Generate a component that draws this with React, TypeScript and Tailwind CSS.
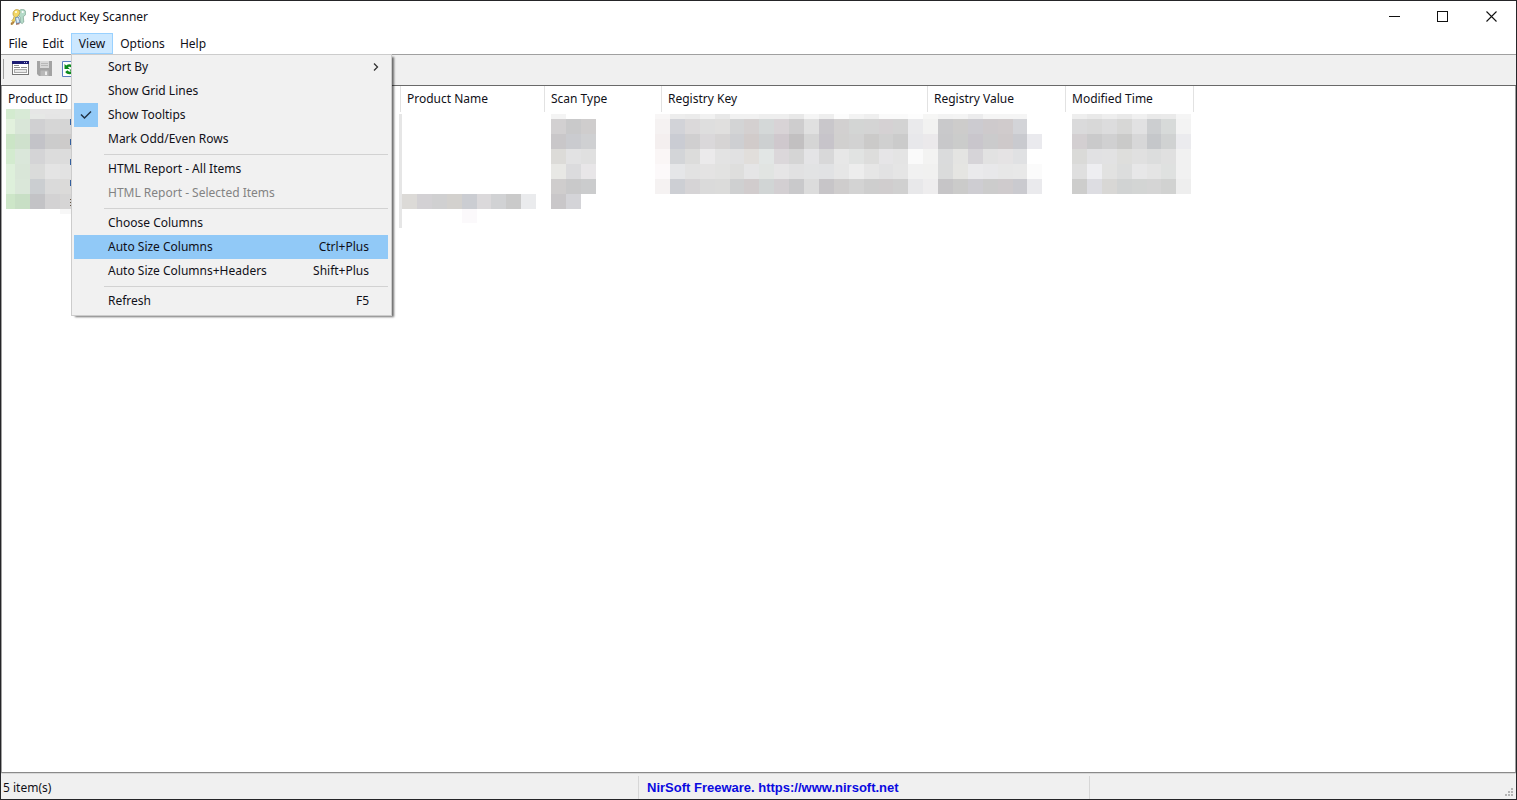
import React from "react";

const PITCH = 14.9;
const ROW_EDGES = [2, 7, 22, 37, 52, 67, 82, 97];

const viewMenu = [
  [
    { label: "Sort By", submenu: true },
    { label: "Show Grid Lines" },
    { label: "Show Tooltips", checked: true },
    { label: "Mark Odd/Even Rows" },
  ],
  [
    { label: "HTML Report - All Items" },
    { label: "HTML Report - Selected Items", disabled: true },
  ],
  [
    { label: "Choose Columns" },
    { label: "Auto Size Columns", keys: "Ctrl+Plus", active: true },
    { label: "Auto Size Columns+Headers", keys: "Shift+Plus" },
  ],
  [{ label: "Refresh", keys: "F5" }],
] as {
  label: string;
  keys?: string;
  submenu?: boolean;
  checked?: boolean;
  disabled?: boolean;
  active?: boolean;
}[][];

const columns = [
  { label: "Product ID", width: "w-[399px]" },
  { label: "Product Name", width: "w-[144px]" },
  { label: "Scan Type", width: "w-[117px]" },
  { label: "Registry Key", width: "w-[266px]" },
  { label: "Registry Value", width: "w-[138px]" },
  { label: "Modified Time", width: "w-[128px]" },
];

// One string per row of blocks, one colour per block, "-" leaves it empty
const productId = [
  "d3ebcf d8ead6 e6e8e6 e5e5e5 e6e6e6",
  "e2f1dd d9e6d8 d0d0d2 d6d6d6 d5d5d5",
  "cbe5c6 cfe1cd c3c3c8 cccccc cdcbca",
  "d3ebcf dae7da d4d4d6 dcdcdc dcdcdc",
  "def0db d9e6d8 dadbda e4e4e4 e2e2e2",
  "def0db dae7d9 cbced1 dadada dbdad9",
  "cde6c8 c8dfc5 c3c3c6 d3d2d3 d6d5d5",
];

const productName = ["-", "-", "-", "-", "-", "-", "dcdad7 d3d1d4 d0d0d1 d3d1ce cbcdd2 dbd9db d1d2d4 cacaca eaebed"];

const scanType = [
  "f4f4f4",
  "d2d0d1 c9c9ca cfcdcd",
  "c9c7c9 cacbcf cfd0d2",
  "dcdbd8 e2e2e3 e0e0e0",
  "e8e8e5 dbdbdd e8e6e8",
  "cfcdcd c9c9ca cbcccd",
  "c9c7c9 d4d4d8",
];

const registryKey = [
  "f8f6f6 ededed ebebeb f1f1f1 e8e8e8 f1f1f1 f1f1f1 eeeeee eeeeee e8e8e8 f5f5f5 eeeeee fcfcfc f3f3f3 efefef fafafa fafafa fdfdfd f6f6f5",
  "f5f2f2 d2d3d8 dbd9da dedede e0dfde d3d4d5 d4d0d0 d4d8d8 d8d3d6 cecdce e0e0e0 c9c7cb d2d0d0 d3d5d4 d4d4d4 d5d1d3 d3d3d3 eaeaec f2f2f1",
  "f4efef caccd3 d0cfd0 dad8da d6d4d4 cecfd2 d1cbca cdd0d1 cfc8cd c2c0c1 d5d5d5 c7c4ca d1d0cf d2d2d2 cbcac9 d0d0d0 cbcbcb e8e8eb ebe9eb",
  "faf6f6 d3d5d8 dcdcdb ebeaeb e3e3e3 e1e1e2 e1dedb e2e6e5 dbd7da d5d5d5 e4e4e6 d8d8d9 e7e7e7 e1e3e2 dddddc e6e5e7 e4e4e4 fafafa f3f3f2",
  "fcf9fa e5e6e8 e2e2e2 e4e3e3 e2e2e1 dededd e5e5e6 e1e4e2 e6e5e6 e1e1e2 e2e3e4 e1e2e4 e6e6e6 ededed e6e6e6 e2e2e3 e5e5e5 f1f1f1 f1f1f0",
  "f5f2f2 cdcfd4 d6d4d6 dadada dbdbda cfd0d1 d1cccd d1d5d5 d3cfd2 c9c9cb dcdcdc c7c5c8 cfcdcd d3d3d3 cecece d0cdce d0d0d0 e8e8ea eeedee",
];

const registryValue = [
  "f3f3f3 f4f4f4 ececed f5f5f5 f5f5f5 f5f5f5",
  "c9c9cb cdcccb cccbd0 cecacc d0cbcc d3d4d8",
  "c8c8ca cbcccb c9c6cc cbcbcc cec9ca c9cacf eaeaee",
  "dadbdc e4e4e2 d6d4d8 e2e2e2 e5e3e4 e0e1e3",
  "dadbdb e5e5e2 eaeaec e8e8ea e7e7e7 e8e8e8 fbfbfb",
  "c6c5c7 cbcbca cecdd2 cccccc cfcbcd cacacf eaeaed",
];

const modifiedTime = [
  "eeeeee e9e9e9 eeeeee e9e9e9 f0f0f0 e9e9e9 eaeaea f5f5f5",
  "dadadb d8d8d8 dcdcdd d7d7d6 e1e1e2 ccced0 d7dad9 f3f3f3",
  "d3cfd1 cacacb d0d0d1 cacac9 d7d7d8 c5c7ca d0d2d2 ebebee",
  "dadad8 e1e1e3 e2e2e3 dededc e0e0e0 dcdddd e0e0e0 f1f1f1",
  "dfdfdf eeeef1 e2e2e1 dcdddd e7e7e8 e4e4e4 dfe1e0 f1f1f1",
  "cdcdcc dddde2 d8d7d5 d1d3d3 d3d5d4 d5d5d5 d1d2d1 eeeeee",
];

const Mosaic = ({ rows, start, children }: { rows: string[]; start: number; children?: React.ReactNode }) => (
  <svg className="block w-full h-32 overflow-visible" shapeRendering="crispEdges" aria-hidden="true">
    {rows.map((row, r) =>
      row.split(" ").map((color, c) =>
        color === "-" ? null : (
          <rect
            key={`${r}-${c}`}
            x={Math.round(start + c * PITCH)}
            y={ROW_EDGES[r]}
            width={Math.round(start + (c + 1) * PITCH) - Math.round(start + c * PITCH)}
            height={ROW_EDGES[r + 1] - ROW_EDGES[r]}
            fill={`#${color}`}
          />
        )
      )
    )}
    {children}
  </svg>
);

const KeyIcon = () => (
  <svg className="size-4" viewBox="0 0 16 16" aria-hidden="true">
    <path d="M8.500 2.500C9.500.600 12 .100 14 .800c1.800.700 2.300 3 1.600 4.600-.5 1.200-1.500 1.700-2.300 2.200L13.800 13l-1.600 1.600-1.800-1-.2-5.400C8.300 7 7.600 4.600 8.500 2.500z" fill="#b4dac8" stroke="#7ba08f" strokeWidth=".7" />
    <path d="M3.500 2.500C4.800.300 7.500 0 9 1.200c1.300 1.200 1 3.600-.5 5L5.500 11 3 15.300l-2 .2.2-1.800 1.300-1.200-.700-1 1.500-1.500L4 7.500C2.800 6 2.700 4 3.500 2.500z" fill="#f3d766" stroke="#b39643" strokeWidth=".7" />
    <circle cx="6" cy="2.900" r="1" fill="#fff" />
    <circle cx="12.700" cy="3" r="1.100" fill="#fff" />
    <path d="M5.500 8.500l3-.5 1.500 5.500-3.500 1z" fill="#dcebf5" stroke="#527da8" strokeWidth=".8" />
    <path d="M1 15.300l3-2.600M6 15.200l3.500-.5" stroke="#8a4a35" strokeWidth="1" />
  </svg>
);

const WindowIcon = () => (
  <svg className="w-[17px] h-[15px]" viewBox="0 0 17 15" aria-hidden="true">
    <rect x=".5" y=".5" width="16" height="13" fill="#fff" stroke="#777" />
    <rect x="0" y="0" width="17" height="3" fill="#1b1b72" />
    <path d="M12 1.500h1M14 1.500h1" stroke="#c8c8e8" />
    <path d="M2 4.500h5M2 6.500h6M9 6.500h6" stroke="#8a8a8a" />
    <rect x="2.500" y="8.500" width="12" height="3" fill="#e8e8e8" stroke="#aaa" />
  </svg>
);

const SaveIcon = () => (
  <svg className="w-[15px] h-[15px]" viewBox="0 0 15 15" aria-hidden="true">
    <path d="M0 0h15v15H2l-2-2z" fill="#a3a3a3" />
    <path d="M3 0h9v7H3z" fill="#d8d8d8" />
    <path d="M4 2.500h7M4 4.500h7" stroke="#b8b8b8" />
    <path d="M3.500 9.500h8V15h-8z" fill="#b9b9b9" />
    <path d="M8 10.500h2V14H8z" fill="#efefef" />
  </svg>
);

const RefreshIcon = () => (
  <svg className="w-[15px] h-[16px]" viewBox="0 0 15 16" aria-hidden="true">
    <path d="M.5.500h11l3 3v12H.500z" fill="#fff" stroke="#5c7fc0" />
    <path d="M2.500 8V3l1.700 1.500C6.500 2.500 10 3 11.800 5.500L9.600 7.200C8.600 5.800 7 5.500 6 6.300L7.700 8z" fill="#0c8a1c" />
    <path d="M12.500 8.500v5l-1.700-1.500c-2.300 2-5.800 1.500-7.600-1l2.200-1.700c1 1.400 2.600 1.700 3.600.9L7.300 8.500z" fill="#0c8a1c" />
  </svg>
);

const ViewMenu = () => (
  <div role="menu" className="absolute left-0 top-[21px] z-20 w-[321px] border border-[#ccc] bg-[#f1f1f1] pl-[2px] pr-[3px] pb-[2px] shadow-[3px_2px_2px_-1px_#00000090]">
    {viewMenu.map((group, g) => (
      <div key={g}>
        {g > 0 && (
          <div className="h-[6px] pl-[30px] flex items-center">
            <hr className="w-full border-[#d2d2d2]" />
          </div>
        )}
        {group.map((item) => (
          <button
            key={item.label}
            role={item.checked ? "menuitemcheckbox" : "menuitem"}
            aria-checked={item.checked}
            disabled={item.disabled}
            className={`flex w-full h-6 items-center pr-[19px] text-left whitespace-nowrap ${item.active ? "bg-[#91c9f7]" : ""} ${item.disabled ? "text-[#838383]" : ""}`}
          >
            <span className={`flex w-6 h-full items-center justify-center mr-[10px] ${item.checked ? "bg-[#91c9f7]" : ""}`}>
              {item.checked && (
                <svg className="w-3 h-2.5" viewBox="0 0 12 10" aria-hidden="true">
                  <path d="M1 4.500l3.500 3.500L11 1.500" fill="none" stroke="#223344" strokeWidth="1.500" />
                </svg>
              )}
            </span>
            <span className="flex-1">{item.label}</span>
            {item.keys && <span>{item.keys}</span>}
            {item.submenu && (
              <svg className="w-[6px] h-2.5 -mr-[10px]" viewBox="0 0 6 10" aria-hidden="true">
                <path d="M1 1.500l3.500 3.500L1 8.500" fill="none" stroke="#333" strokeWidth="1.300" />
              </svg>
            )}
          </button>
        ))}
      </div>
    ))}
  </div>
);

export default function App() {
  return (
    <div className="h-screen flex flex-col bg-white border border-[#252528] font-['Noto_Sans','Segoe_UI',sans-serif] text-[12px] leading-4 text-[#101018] overflow-hidden">
      <header className="flex h-8 shrink-0 items-center pl-[9px] pb-px">
        <KeyIcon />
        <h1 className="flex-1 ml-[6px]">Product Key Scanner</h1>
        <button aria-label="Minimize" className="flex w-12 h-full items-center justify-center">
          <svg className="size-[11px]" viewBox="0 0 11 11">
            <path d="M0 5.500h11" stroke="#111" />
          </svg>
        </button>
        <button aria-label="Maximize" className="flex w-12 h-full items-center justify-center">
          <svg className="size-[11px]" viewBox="0 0 11 11">
            <rect x=".5" y=".5" width="10" height="10" fill="none" stroke="#111" />
          </svg>
        </button>
        <button aria-label="Close" className="flex w-[50px] h-full items-center justify-center">
          <svg className="size-[11px]" viewBox="0 0 11 11">
            <path d="M.5.500l10 10M10.500.500l-10 10" stroke="#111" strokeWidth="1.100" />
          </svg>
        </button>
      </header>

      <nav className="flex h-[21px] shrink-0">
        <button className="w-[34px]">File</button>
        <button className="w-9">Edit</button>
        <div className="relative w-[42px]">
          <button aria-haspopup="menu" aria-expanded="true" className="w-full h-[21px] border border-[#99d1ff] bg-[#cce8ff]">
            View
          </button>
          <ViewMenu />
        </div>
        <button className="w-[59px]">Options</button>
        <button className="w-[42px]">Help</button>
      </nav>

      <div className="flex h-8 shrink-0 items-center border-t border-b border-t-[#a0a0a0] border-b-[#696969] bg-[#f0f0f0] pl-[2px] pb-[3px]">
        <div className="w-px h-5 bg-[#a0a0a0] mr-[8px]" />
        <button aria-label="Properties" className="mr-2">
          <WindowIcon />
        </button>
        <button aria-label="Save" className="mr-[10px]">
          <SaveIcon />
        </button>
        <button aria-label="Refresh">
          <RefreshIcon />
        </button>
      </div>

      <main className="flex-1 min-h-0 overflow-hidden border-l border-r border-b border-l-[#a0a0a0] border-r-[#a0a0a0] border-b-[#8a8a8a]">
        <table className="table-fixed w-[1192px] border-collapse">
          <thead>
            <tr className="h-[26px]">
              {columns.map((column) => (
                <th key={column.label} scope="col" className={`${column.width} p-0 text-left font-normal`}>
                  <div className="flex h-[26px] items-center border-r border-[#e2e2e2] pl-[6px]">{column.label}</div>
                </th>
              ))}
            </tr>
          </thead>
          <tbody>
            <tr>
              <td className="p-0">
                <Mosaic rows={productId} start={-2}>
                  <path d="M4-3h9v5H4z" fill="#d3ebcf" />
                  <path d="M13-3h15v5H13z" fill="#d8ead6" />
                  <path d="M28-3h42v5H28z" fill="#e6e6e6" />
                  <path d="M-2 2h6v95h-6z" fill="#fff" />
                  <path d="M58 97h12v5H58z" fill="#f7f7f7" />
                  <path d="M68.500 7v6M68.500 27v6M68.500 47v6M68.500 68v6" stroke="#345f9d" />
                  <path d="M68.500 87v8" stroke="#665544" strokeDasharray="1 2" />
                </Mosaic>
              </td>
              <td className="p-0">
                <Mosaic rows={productName} start={1}>
                  <path d="M-2 2h3v114h-3z" fill="#e6e6e6" />
                  <path d="M61 97h15v14H61z" fill="#fbf9fb" />
                </Mosaic>
              </td>
              <td className="p-0">
                <Mosaic rows={scanType} start={6} />
              </td>
              <td className="p-0">
                <Mosaic rows={registryKey} start={-7} />
              </td>
              <td className="p-0">
                <Mosaic rows={registryValue} start={10} />
              </td>
              <td className="p-0">
                <Mosaic rows={modifiedTime} start={6} />
              </td>
            </tr>
          </tbody>
        </table>
      </main>

      <footer className="flex h-[26px] shrink-0 items-stretch border-t border-[#d8d8d8] bg-[#f0f0f0] pt-[2px]">
        <div className="flex w-[638px] items-center border-r border-[#d7d7d7] pl-[2px]">5 item(s)</div>
        <div className="flex w-[451px] items-center border-r border-[#d7d7d7] pl-2">
          <a href="https://www.nirsoft.net" className="font-['Liberation_Sans',Arial,sans-serif] text-[13px] font-bold text-[#0a0ae0]">
            NirSoft Freeware. https://www.nirsoft.net
          </a>
        </div>
        <div className="flex flex-1 items-end justify-end pr-[2px] pb-[2px]">
          <svg className="size-[9px]" viewBox="0 0 9 9" aria-hidden="true">
            <path d="M6 0h2v2H6zM3 3h2v2H3zM6 3h2v2H6zM0 6h2v2H0zM3 6h2v2H3zM6 6h2v2H6z" fill="#b4b4b4" />
          </svg>
        </div>
      </footer>
    </div>
  );
}
